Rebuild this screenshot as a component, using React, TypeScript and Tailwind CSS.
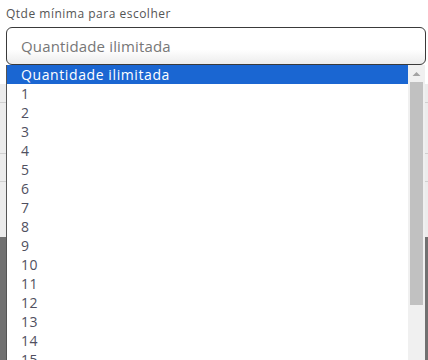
const options = ['Quantidade ilimitada', ...Array.from({ length: 20 }, (_, i) => String(i + 1))];

export default function App() {
  return (
    <div
      className="relative w-[428px] h-[360px] overflow-hidden bg-white"
      style={{ fontFamily: '"Open Sans", "Liberation Sans", sans-serif' }}
    >
      {/* page behind the open select */}
      <div className="flex flex-col h-full">
        <div className="h-[84px] bg-white" />
        <div className="h-[153px] bg-[#ececec] flex flex-col">
          <div className="h-[19px] border-b border-[#d0d0d0]" />
          <div className="h-[51px] border-b border-[#d0d0d0]" />
          <div className="h-[28px] border-b border-[#d0d0d0]" />
        </div>
        <div className="flex-1 bg-[#717171]" />
      </div>

      <div className="absolute left-0 top-0 w-full bg-white px-[6px] pt-[6px]">
        <div className="text-[12px] leading-[15px] tracking-[0.5px] text-[#555]">Qtde mínima para escolher</div>
        <div className="mt-[6px] h-[38px] w-[420px] rounded-[6px] border border-[#3a3a3a] bg-gradient-to-b from-white from-60% to-[#ececec] flex items-center pl-[14px] text-[15px] tracking-[0.15px] text-[#777]">
          Quantidade ilimitada
        </div>
      </div>

      {/* native dropdown popup */}
      <div className="absolute left-[6px] top-[65px] w-[419px] h-[300px] flex border-l border-[#555] bg-white">
        <div className="flex-1 flex flex-col">
          {options.map((o, i) => (
            <div
              key={o}
              className={
                'h-[19px] shrink-0 pl-[14px] text-[14px] leading-[19px] tracking-[0.6px] ' +
                (i === 0 ? 'bg-[#1a66d2] text-white' : 'text-[#505060]')
              }
            >
              {o}
            </div>
          ))}
        </div>
        <div className="w-[17px] bg-[#f0f0f0] flex flex-col items-center">
          <svg width="17" height="17" viewBox="0 0 17 17" className="shrink-0">
            <path d="M4.5 11 L8.5 7 L12.5 11 Z" fill="#a3a3a3" />
          </svg>
          <div className="w-[13px] h-[223px] bg-[#c1c1c1]" />
        </div>
      </div>
    </div>
  );
}
